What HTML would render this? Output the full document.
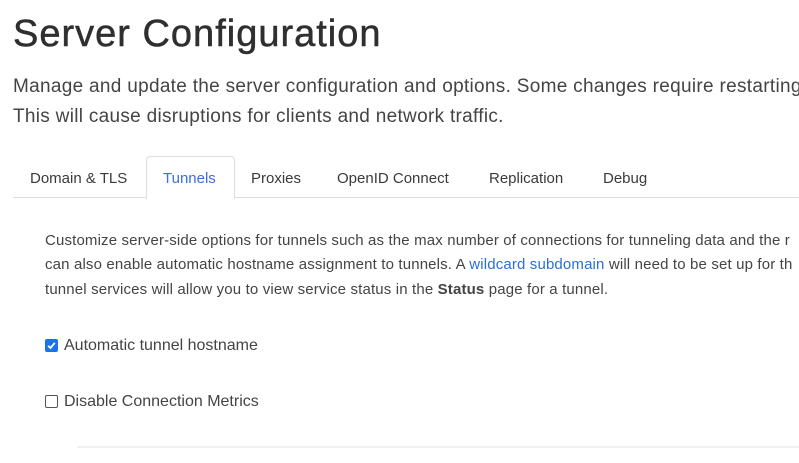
<!DOCTYPE html>
<html><head><style>
body{margin:0;width:799px;height:463px;overflow:hidden;background:#fff;font-family:"Liberation Sans",sans-serif;color:#3a3a3a;position:relative}
.a{position:absolute;white-space:nowrap}
h1{position:absolute;left:13px;top:13px;margin:0;font-size:38px;font-weight:normal;color:#2f2f2f;letter-spacing:1px;-webkit-text-stroke:0.5px #2f2f2f}
.p{font-size:19px;color:#444;letter-spacing:0.3px}
.tabs{position:absolute;left:13px;top:197px;width:786px;border-top:1px solid #ddd}
.tab{position:absolute;top:170px;font-size:15px;color:#3a3a3a}
.act{position:absolute;left:146px;top:156px;width:87px;height:42px;border:1px solid #ddd;border-bottom:none;border-radius:4px 4px 0 0;background:#fff}
.b{font-size:15px;color:#444;letter-spacing:0.15px}
a{color:#2a6fd6;text-decoration:none}
.cb{position:absolute;left:45px;width:11px;height:11px;border:1px solid #555;border-radius:2px}
</style></head><body>
<h1>Server Configuration</h1>
<div class="a p" style="left:13px;top:76px">Manage and update the server configuration and options. Some changes require restarting</div>
<div class="a p" style="left:13px;top:106px">This will cause disruptions for clients and network traffic.</div>
<div class="tabs"></div>
<div class="act"></div>
<div class="tab a" style="left:30px">Domain &amp; TLS</div>
<div class="tab a" style="left:163px;color:#3a6fe0">Tunnels</div>
<div class="tab a" style="left:251px">Proxies</div>
<div class="tab a" style="left:337px">OpenID Connect</div>
<div class="tab a" style="left:489px">Replication</div>
<div class="tab a" style="left:603px">Debug</div>
<div class="a b" style="left:45px;top:232px">Customize server-side options for tunnels such as the max number of connections for tunneling data and the r</div>
<div class="a b" style="left:45px;top:256px">can also enable automatic hostname assignment to tunnels. A <a>wildcard subdomain</a> will need to be set up for th</div>
<div class="a b" style="left:45px;top:281px">tunnel services will allow you to view service status in the <b>Status</b> page for a tunnel.</div>
<div class="cb" style="top:339px;background:#1a73e8;border-color:#1a73e8"><svg width="11" height="11" viewBox="0 0 11 11" style="position:absolute;left:0;top:0"><path d="M2.2 5.8L4.5 8L8.8 2.8" stroke="#fff" stroke-width="1.8" fill="none"/></svg></div>
<div class="a" style="left:64px;top:337px;font-size:16px;color:#444">Automatic tunnel hostname</div>
<div class="cb" style="top:395px"></div>
<div class="a" style="left:64px;top:393px;font-size:16px;color:#444">Disable Connection Metrics</div>
<div class="a" style="left:77px;top:446px;width:722px;height:2px;background:#f0f0f0"></div>
</body></html>
